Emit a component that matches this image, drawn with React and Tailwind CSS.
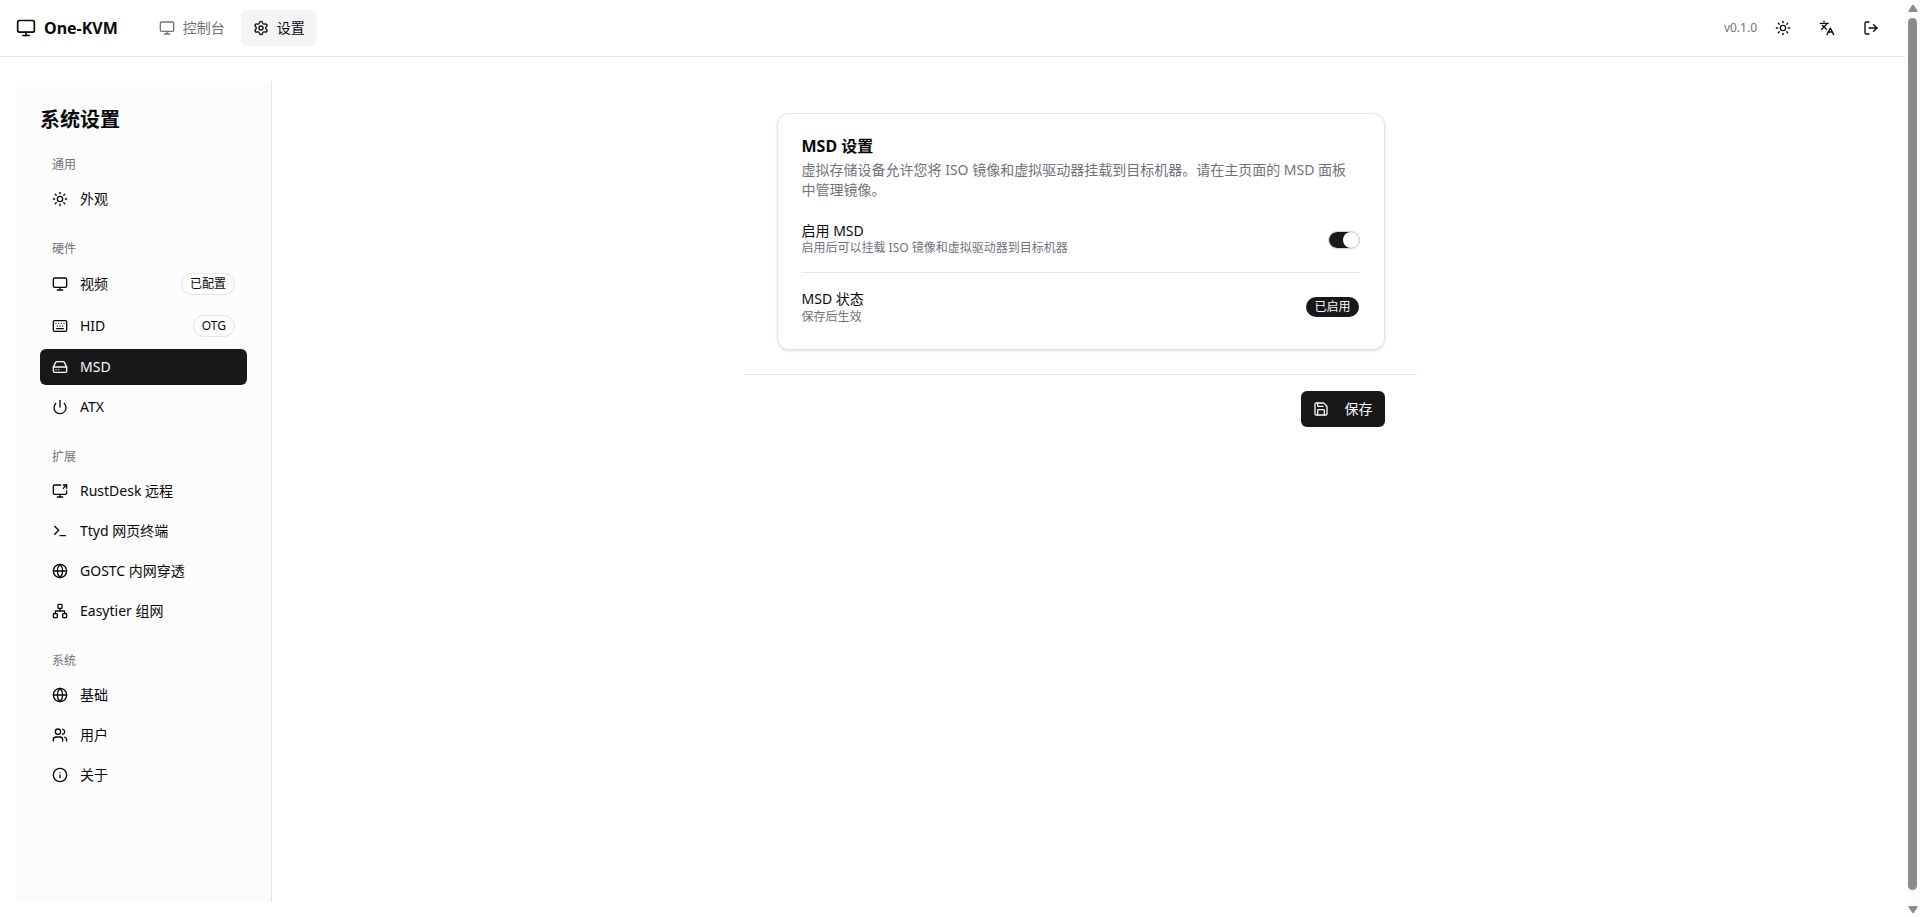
import { useState } from 'react';
import clsx from 'clsx';
import {
  Globe,
  HardDrive,
  Info,
  Keyboard,
  Languages,
  LogOut,
  Monitor,
  Network,
  Power,
  Save,
  ScreenShare,
  Settings,
  Sun,
  Terminal,
  Users,
} from 'lucide-react';

const navGroups = [
  {
    title: '通用',
    items: [{ id: 'appearance', label: '外观', icon: Sun }],
  },
  {
    title: '硬件',
    items: [
      { id: 'video', label: '视频', icon: Monitor, status: '已配置' },
      { id: 'hid', label: 'HID', icon: Keyboard, status: 'OTG' },
      { id: 'msd', label: 'MSD', icon: HardDrive },
      { id: 'atx', label: 'ATX', icon: Power },
    ],
  },
  {
    title: '扩展',
    items: [
      { id: 'rustdesk', label: 'RustDesk 远程', icon: ScreenShare },
      { id: 'ttyd', label: 'Ttyd 网页终端', icon: Terminal },
      { id: 'gostc', label: 'GOSTC 内网穿透', icon: Globe },
      { id: 'easytier', label: 'Easytier 组网', icon: Network },
    ],
  },
  {
    title: '系统',
    items: [
      { id: 'general', label: '基础', icon: Globe },
      { id: 'users', label: '用户', icon: Users },
      { id: 'about', label: '关于', icon: Info },
    ],
  },
];

const IconButton = ({ icon: Icon, label }) => (
  <button
    type="button"
    aria-label={label}
    className="flex size-9 items-center justify-center rounded-md hover:bg-zinc-100"
  >
    <Icon className="size-4" />
  </button>
);

const Header = () => (
  <header className="flex h-[57px] shrink-0 items-center border-b border-[#e4e4e7] px-4">
    <a href="#" className="flex items-center gap-2">
      <Monitor className="size-5" />
      <span className="text-base font-bold">One-KVM</span>
    </a>

    <nav className="ml-[29px] flex items-center gap-1">
      <a href="#console" className="flex h-9 items-center gap-2 rounded-md px-3 text-sm text-[#71717a]">
        <Monitor className="size-4" />
        控制台
      </a>
      <a href="#settings" className="flex h-9 items-center gap-2 rounded-md bg-[#f4f4f5] px-3 text-sm">
        <Settings className="size-4" />
        设置
      </a>
    </nav>

    <div className="ml-auto flex items-center gap-2">
      <span className="text-xs text-[#71717a]">v0.1.0</span>
      <IconButton icon={Sun} label="切换主题" />
      <IconButton icon={Languages} label="切换语言" />
      <IconButton icon={LogOut} label="退出登录" />
    </div>
  </header>
);

const Sidebar = ({ active, onSelect }) => (
  <aside className="w-64 shrink-0 border-r border-[#e4e4e7] bg-[#fcfcfc] p-6">
    <h1 className="mb-[22px] text-xl leading-[30px] font-bold">系统设置</h1>
    <nav className="flex flex-col gap-6">
      {navGroups.map((group) => (
        <div key={group.title}>
          <h3 className="mb-2 px-3 text-xs leading-4 text-[#71717a]">{group.title}</h3>
          <div className="flex flex-col gap-1">
            {group.items.map(({ id, label, icon: Icon, status }) => (
              <button
                key={id}
                type="button"
                onClick={() => onSelect(id)}
                className={clsx(
                  'flex w-full items-center gap-3 rounded-md px-3 py-2 text-left text-sm leading-5',
                  active === id && 'bg-[#18181b] text-[#fafafa]'
                )}
              >
                <Icon className="size-4 shrink-0" />
                <span>{label}</span>
                {status && (
                  <span className="ml-auto rounded-full border border-[#e4e4e7] px-2 py-0.5 text-xs leading-4">
                    {status}
                  </span>
                )}
              </button>
            ))}
          </div>
        </div>
      ))}
    </nav>
  </aside>
);

const Switch = ({ id, checked, onChange }) => (
  <span className="relative flex h-[18px] w-8 items-center">
    <input
      id={id}
      type="checkbox"
      role="switch"
      checked={checked}
      onChange={(e) => onChange(e.target.checked)}
      className="peer h-[18px] w-8 cursor-pointer appearance-none rounded-full border border-[#d4d4d8] bg-[#e4e4e7] bg-clip-padding shadow-xs checked:bg-[#18181b]"
    />
    <span className="pointer-events-none absolute left-px size-4 rounded-full bg-white transition-transform peer-checked:translate-x-3.5" />
  </span>
);

const MsdSettings = () => {
  const [enabled, setEnabled] = useState(true);

  return (
    <div className="mx-auto w-full max-w-2xl">
      <div className="px-8 pt-8">
        <section className="rounded-xl border border-[#e4e4e7] bg-white p-6 shadow-sm">
          <h2 className="mb-1.5 text-base leading-4 font-bold">MSD 设置</h2>
          <p className="text-sm leading-5 text-[#71717a]">
            虚拟存储设备允许您将 ISO 镜像和虚拟驱动器挂载到目标机器。请在主页面的 MSD 面板中管理镜像。
          </p>

          <div className="mt-6 flex items-center justify-between">
            <div className="flex flex-col gap-0.5">
              <label htmlFor="msd-enabled" className="text-sm leading-[14px]">
                启用 MSD
              </label>
              <p className="text-xs leading-4 text-[#71717a]">启用后可以挂载 ISO 镜像和虚拟驱动器到目标机器</p>
            </div>
            <Switch id="msd-enabled" checked={enabled} onChange={setEnabled} />
          </div>

          <hr className="my-4 border-[#e4e4e7]" />

          <div className="flex items-center justify-between">
            <div>
              <p className="text-sm leading-5">MSD 状态</p>
              <p className="text-xs leading-4 text-[#71717a]">保存后生效</p>
            </div>
            <span className="rounded-full border border-transparent bg-[#18181b] bg-clip-padding px-2 py-0.5 text-xs leading-4 text-[#fafafa]">
              {enabled ? '已启用' : '已禁用'}
            </span>
          </div>
        </section>
      </div>

      <div className="mt-6 flex justify-end border-t border-[#e4e4e7] px-8 pt-4">
        <button
          type="button"
          className="flex h-9 items-center gap-4 rounded-md bg-[#18181b] px-3 text-sm text-[#fafafa]"
        >
          <Save className="size-4" />
          保存
        </button>
      </div>
    </div>
  );
};

const ScrollTrack = () => (
  <div aria-hidden="true" className="flex w-[15px] shrink-0 flex-col items-center bg-[#fcfcfc] pt-1 pb-[3px]">
    <svg viewBox="0 0 10 8" className="h-2 w-2.5 fill-[#8b8b8b]">
      <path d="M4.2 1.3 Q5 0.4 5.8 1.3 L9.4 6.6 Q9.8 8 8.6 8 H1.4 Q0.2 8 0.6 6.6 Z" />
    </svg>
    <div className="mt-1.5 mb-4 w-[9px] flex-1 rounded-full bg-[#8b8b8b]" />
    <svg viewBox="0 0 10 8" className="h-2 w-2.5 fill-[#8b8b8b]">
      <path d="M4.2 6.7 Q5 7.6 5.8 6.7 L9.4 1.4 Q9.8 0 8.6 0 H1.4 Q0.2 0 0.6 1.4 Z" />
    </svg>
  </div>
);

const App = () => {
  const [active, setActive] = useState('msd');

  return (
    <div className="flex h-screen bg-white font-['Noto_Sans','Noto_Sans_CJK_SC',sans-serif] text-[#09090b]">
      <div className="flex min-w-0 flex-1 flex-col">
        <Header />
        <div className="flex flex-1 px-4 pt-6 pb-[15px]">
          <Sidebar active={active} onSelect={setActive} />
          <main className="min-w-0 flex-1">
            <MsdSettings />
          </main>
        </div>
      </div>
      <ScrollTrack />
    </div>
  );
};

export default App;
